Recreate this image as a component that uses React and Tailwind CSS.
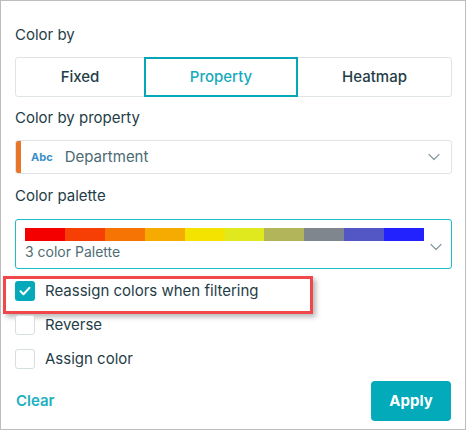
const PALETTE = [
  "#f40000",
  "#f53f05",
  "#f57404",
  "#f5ab01",
  "#f4e200",
  "#e0e81e",
  "#b3b55a",
  "#7f868e",
  "#5357c6",
  "#2222fe",
];

function Chevron() {
  return (
    <svg width="12" height="8" viewBox="0 0 12 8" fill="none" className="shrink-0">
      <path d="M1 1.5l5 5 5-5" stroke="#8a9aa0" strokeWidth="1.2" strokeLinecap="round" strokeLinejoin="round" />
    </svg>
  );
}

function Checkbox({ checked, label, children }) {
  return (
    <div className="relative flex items-center h-5">
      {children}
      {checked ? (
        <div className="w-5 h-5 rounded-[3px] bg-[#06a9b9] flex items-center justify-center">
          <svg width="12" height="10" viewBox="0 0 12 10" fill="none">
            <path d="M1.5 5.2l3 3 6-6.4" stroke="#ffffff" strokeWidth="2" strokeLinecap="round" strokeLinejoin="round" />
          </svg>
        </div>
      ) : (
        <div className="w-5 h-5 rounded-[3px] border border-[#d6dee1] bg-white" />
      )}
      <span className="ml-[10px] text-[15px] leading-5 text-[#1f3d47]">{label}</span>
    </div>
  );
}

export default function App() {
  return (
    <div
      className="w-[466px] h-[430px] border border-[#bdbdbd] bg-white px-[14px] pt-[24px]"
      style={{ fontFamily: "Inter, 'Noto Sans', sans-serif" }}
    >
      {/* Color by */}
      <div className="text-[15px] leading-5 text-[#1f3d47]">Color by</div>
      <div className="mt-3 flex h-10 w-[437px] rounded-[3px] border border-[#dfe4e7]">
        <button className="w-[128px] text-[15px] font-medium text-[#1f3d47]">Fixed</button>
        <button className="w-[154px] -my-px border-2 border-[#06a6b6] text-[15px] font-medium text-[#16aabb]">
          Property
        </button>
        <button className="flex-1 text-[15px] font-medium text-[#1f3d47]">Heatmap</button>
      </div>

      {/* Color by property */}
      <div className="mt-[11px] text-[15px] leading-5 text-[#1f3d47]">Color by property</div>
      <div className="mt-3 flex h-[34px] w-[437px] items-center overflow-hidden rounded-[3px] border border-[#dfe4e7]">
        <div className="h-full w-[5px] bg-[#e8762a]" />
        <span className="ml-[10px] text-[11px] font-bold text-[#3a8fc6]">Abc</span>
        <span className="ml-[12px] flex-1 text-[15px] text-[#4b6a73]">Department</span>
        <div className="mr-[11px]">
          <Chevron />
        </div>
      </div>

      {/* Color palette */}
      <div className="mt-3 text-[15px] leading-5 text-[#1f3d47]">Color palette</div>
      <div className="mt-[13px] flex h-[50px] w-[437px] items-center rounded-[3px] border border-[#1cbcc8] pl-[9px] pr-[9px]">
        <div className="flex-1">
          <div className="flex h-[13px] w-[399px]">
            {PALETTE.map((c) => (
              <div key={c} className="flex-1" style={{ background: c }} />
            ))}
          </div>
          <div className="mt-[2px] text-[14px] leading-[17px] text-[#4f6d75]">3 color Palette</div>
        </div>
        <div className="mt-[5px]">
          <Chevron />
        </div>
      </div>

      {/* Checkboxes */}
      <div className="mt-3 flex flex-col gap-[14px]">
        <Checkbox checked label="Reassign colors when filtering">
          <div className="absolute left-[-12px] top-[-5px] h-[38px] w-[310px] border-[3px] border-[#f0474a] shadow-[3px_3px_5px_rgba(0,0,0,0.28)] pointer-events-none" />
        </Checkbox>
        <Checkbox label="Reverse" />
        <Checkbox label="Assign color" />
      </div>

      {/* Footer */}
      <div className="mt-3 flex items-center justify-between">
        <button className="ml-px text-[15px] font-semibold text-[#1db0c0]">Clear</button>
        <button className="h-10 w-[80px] rounded-[4px] bg-[#02aaba] text-[15px] font-bold text-white">Apply</button>
      </div>
    </div>
  );
}
